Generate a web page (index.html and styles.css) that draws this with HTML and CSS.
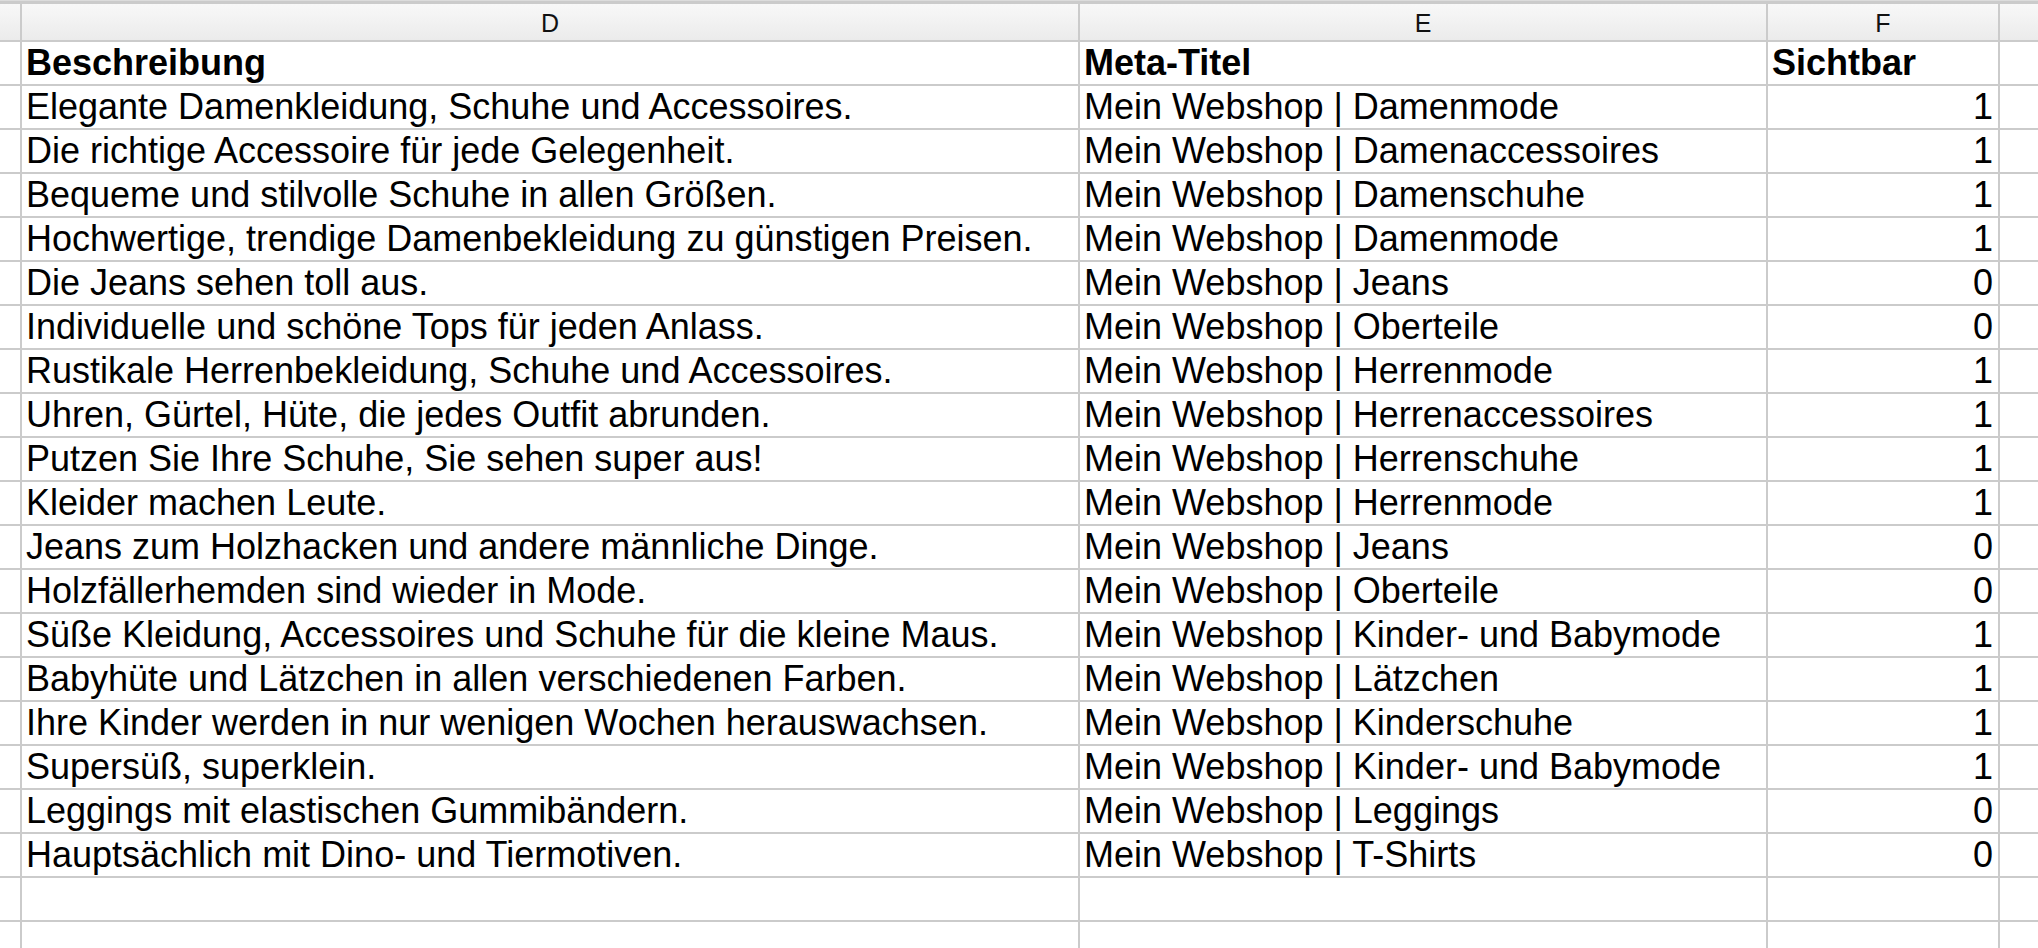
FILE: index.html
```html
<!DOCTYPE html>
<html lang="de">
<head>
<meta charset="utf-8">
<title>Tabelle</title>
<link rel="stylesheet" href="styles.css">
</head>
<body>
<div class="sheet">
  <div class="colhead corner"></div>
  <div class="colhead"><span class="letter">D</span></div>
  <div class="colhead"><span class="letter">E</span></div>
  <div class="colhead"><span class="letter">F</span></div>
  <div class="colhead"></div>

  <div class="rh"></div><div class="c b">Beschreibung</div><div class="c b">Meta-Titel</div><div class="c b">Sichtbar</div><div class="c"></div>
  <div class="rh"></div><div class="c">Elegante Damenkleidung, Schuhe und Accessoires.</div><div class="c">Mein Webshop | Damenmode</div><div class="c n">1</div><div class="c"></div>
  <div class="rh"></div><div class="c">Die richtige Accessoire für jede Gelegenheit.</div><div class="c">Mein Webshop | Damenaccessoires</div><div class="c n">1</div><div class="c"></div>
  <div class="rh"></div><div class="c">Bequeme und stilvolle Schuhe in allen Größen.</div><div class="c">Mein Webshop | Damenschuhe</div><div class="c n">1</div><div class="c"></div>
  <div class="rh"></div><div class="c">Hochwertige, trendige Damenbekleidung zu günstigen Preisen.</div><div class="c">Mein Webshop | Damenmode</div><div class="c n">1</div><div class="c"></div>
  <div class="rh"></div><div class="c">Die Jeans sehen toll aus.</div><div class="c">Mein Webshop | Jeans</div><div class="c n">0</div><div class="c"></div>
  <div class="rh"></div><div class="c">Individuelle und schöne Tops für jeden Anlass.</div><div class="c">Mein Webshop | Oberteile</div><div class="c n">0</div><div class="c"></div>
  <div class="rh"></div><div class="c">Rustikale Herrenbekleidung, Schuhe und Accessoires.</div><div class="c">Mein Webshop | Herrenmode</div><div class="c n">1</div><div class="c"></div>
  <div class="rh"></div><div class="c">Uhren, Gürtel, Hüte, die jedes Outfit abrunden.</div><div class="c">Mein Webshop | Herrenaccessoires</div><div class="c n">1</div><div class="c"></div>
  <div class="rh"></div><div class="c">Putzen Sie Ihre Schuhe, Sie sehen super aus!</div><div class="c">Mein Webshop | Herrenschuhe</div><div class="c n">1</div><div class="c"></div>
  <div class="rh"></div><div class="c">Kleider machen Leute.</div><div class="c">Mein Webshop | Herrenmode</div><div class="c n">1</div><div class="c"></div>
  <div class="rh"></div><div class="c">Jeans zum Holzhacken und andere männliche Dinge.</div><div class="c">Mein Webshop | Jeans</div><div class="c n">0</div><div class="c"></div>
  <div class="rh"></div><div class="c">Holzfällerhemden sind wieder in Mode.</div><div class="c">Mein Webshop | Oberteile</div><div class="c n">0</div><div class="c"></div>
  <div class="rh"></div><div class="c">Süße Kleidung, Accessoires und Schuhe für die kleine Maus.</div><div class="c">Mein Webshop | Kinder- und Babymode</div><div class="c n">1</div><div class="c"></div>
  <div class="rh"></div><div class="c">Babyhüte und Lätzchen in allen verschiedenen Farben.</div><div class="c">Mein Webshop | Lätzchen</div><div class="c n">1</div><div class="c"></div>
  <div class="rh"></div><div class="c">Ihre Kinder werden in nur wenigen Wochen herauswachsen.</div><div class="c">Mein Webshop | Kinderschuhe</div><div class="c n">1</div><div class="c"></div>
  <div class="rh"></div><div class="c">Supersüß, superklein.</div><div class="c">Mein Webshop | Kinder- und Babymode</div><div class="c n">1</div><div class="c"></div>
  <div class="rh"></div><div class="c">Leggings mit elastischen Gummibändern.</div><div class="c">Mein Webshop | Leggings</div><div class="c n">0</div><div class="c"></div>
  <div class="rh"></div><div class="c">Hauptsächlich mit Dino- und Tiermotiven.</div><div class="c">Mein Webshop | T-Shirts</div><div class="c n">0</div><div class="c"></div>
  <div class="rh"></div><div class="c"></div><div class="c"></div><div class="c"></div><div class="c"></div>
  <div class="rh"></div><div class="c"></div><div class="c"></div><div class="c"></div><div class="c"></div>
</div>
</body>
</html>
```

FILE: styles.css
```css
html, body {
  margin: 0;
  padding: 0;
  background: #ffffff;
  overflow: hidden;
}
body {
  width: 2038px;
  height: 948px;
  font-family: "Liberation Sans", Arial, sans-serif;
}
.sheet {
  display: grid;
  grid-template-columns: 20px 1056px 686px 230px 1fr;
  grid-template-rows: 36px;
  grid-auto-rows: 42px;
  gap: 2px;
  padding-top: 3px;
  background: #cbcbcb;
  border-top: 1px solid #dcdcdc;
  box-sizing: border-box;
  height: 948px;
  overflow: hidden;
}
.colhead {
  background: linear-gradient(#f8f8f8, #ebebeb);
  display: flex;
  align-items: flex-end;
  justify-content: center;
  box-sizing: border-box;
}
.letter {
  font-family: "Liberation Sans", Arial, sans-serif;
  font-size: 25px;
  line-height: 30px;
  color: #111111;
  padding-bottom: 2px;
}
.rh {
  background: #ffffff;
}
.c {
  background: #ffffff;
  font-size: 36px;
  line-height: 42px;
  color: #000;
  padding: 0 4px;
  white-space: nowrap;
  overflow: hidden;
}
.b {
  font-weight: bold;
}
.n {
  text-align: right;
  padding-right: 5px;
}
```
